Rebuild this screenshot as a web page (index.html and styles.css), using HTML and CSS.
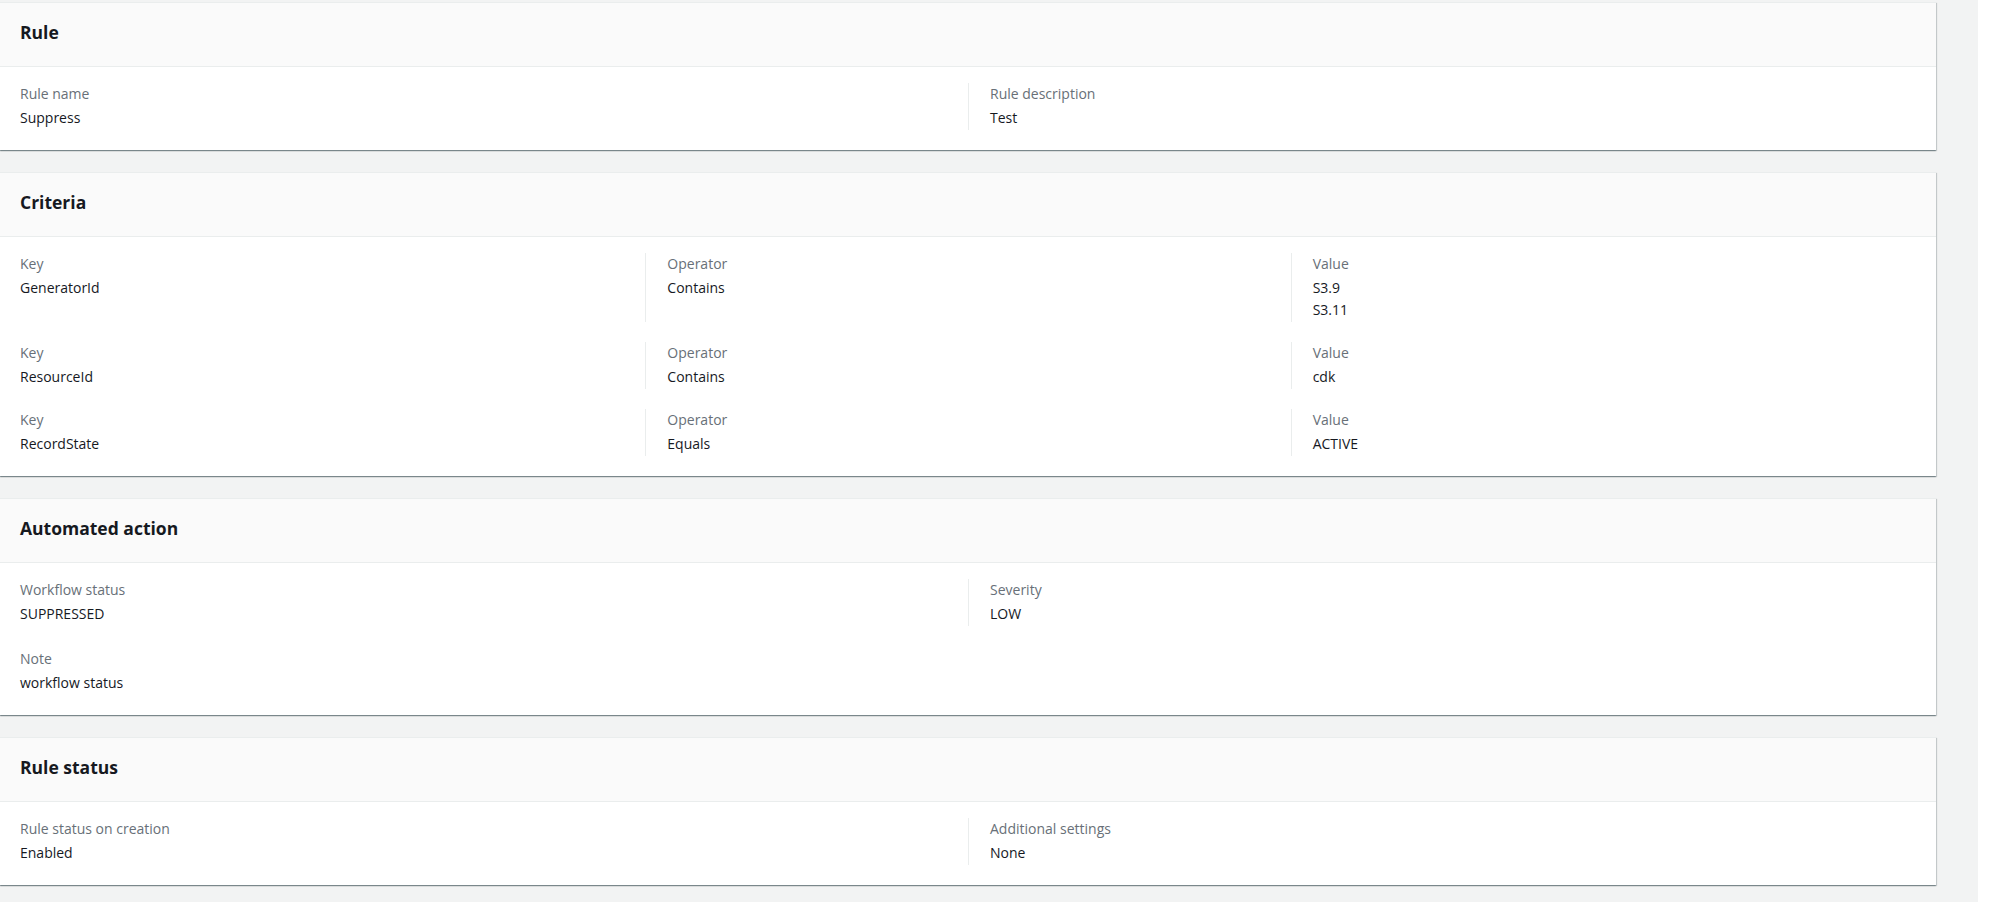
FILE: index.html
```html
<!DOCTYPE html>
<html lang="en">
<head>
<meta charset="utf-8">
<title>Rule details</title>
<link rel="stylesheet" href="styles.css">
</head>
<body>
<div class="page">
  <section class="panel">
    <div class="panel-header"><h2 class="panel-title">Rule</h2></div>
    <div class="panel-body">
      <div class="grid cols-2">
        <div class="cell"><div class="label">Rule name</div><div class="value">Suppress</div></div>
        <div class="cell"><div class="label">Rule description</div><div class="value">Test</div></div>
      </div>
    </div>
  </section>

  <section class="panel">
    <div class="panel-header"><h2 class="panel-title">Criteria</h2></div>
    <div class="panel-body">
      <div class="grid cols-3">
        <div class="cell"><div class="label">Key</div><div class="value">GeneratorId</div></div>
        <div class="cell"><div class="label">Operator</div><div class="value">Contains</div></div>
        <div class="cell"><div class="label">Value</div><div class="value">S3.9</div><div class="value">S3.11</div></div>
      </div>
      <div class="grid cols-3">
        <div class="cell"><div class="label">Key</div><div class="value">ResourceId</div></div>
        <div class="cell"><div class="label">Operator</div><div class="value">Contains</div></div>
        <div class="cell"><div class="label">Value</div><div class="value">cdk</div></div>
      </div>
      <div class="grid cols-3">
        <div class="cell"><div class="label">Key</div><div class="value">RecordState</div></div>
        <div class="cell"><div class="label">Operator</div><div class="value">Equals</div></div>
        <div class="cell"><div class="label">Value</div><div class="value">ACTIVE</div></div>
      </div>
    </div>
  </section>

  <section class="panel">
    <div class="panel-header"><h2 class="panel-title">Automated action</h2></div>
    <div class="panel-body body-tall">
      <div class="grid cols-2">
        <div class="cell stack">
          <div class="field"><div class="label">Workflow status</div><div class="value">SUPPRESSED</div></div>
          <div class="field"><div class="label">Note</div><div class="value">workflow status</div></div>
        </div>
        <div class="cell self-top"><div class="label">Severity</div><div class="value">LOW</div></div>
      </div>
    </div>
  </section>

  <section class="panel">
    <div class="panel-header"><h2 class="panel-title">Rule status</h2></div>
    <div class="panel-body">
      <div class="grid cols-2">
        <div class="cell"><div class="label">Rule status on creation</div><div class="value">Enabled</div></div>
        <div class="cell"><div class="label">Additional settings</div><div class="value">None</div></div>
      </div>
    </div>
  </section>
</div>
</body>
</html>
```

FILE: styles.css
```css
html, body {
  margin: 0;
  padding: 0;
  background: #ffffff;
}

body {
  font-family: "Open Sans", "Liberation Sans", sans-serif;
  color: #16191f;
  -webkit-font-smoothing: antialiased;
}

.page {
  width: 1978px;
  min-height: 902px;
  box-sizing: border-box;
  background: #f2f3f3;
  padding: 2px 42px 0 0;
  display: flex;
  flex-direction: column;
  gap: 22px;
}

.panel {
  background: #ffffff;
  border-top: 1px solid #eaeded;
  box-shadow: 0 1px 1px 0 rgba(0, 28, 36, 0.3),
              1px 1px 1px 0 rgba(0, 28, 36, 0.15),
              -1px 1px 1px 0 rgba(0, 28, 36, 0.15);
}

.panel-header {
  height: 64px;
  box-sizing: border-box;
  padding: 18px 20px 0 20px;
  background: #fafafa;
  border-bottom: 1px solid #eaeded;
}

.panel-title {
  margin: 0;
  font-size: 17.5px;
  line-height: 22px;
  font-weight: 700;
  color: #16191f;
}

.panel-body {
  padding: 16px 0 20px 0;
  display: flex;
  flex-direction: column;
  gap: 20px;
}

.body-tall {
  padding-bottom: 20px;
}

.grid {
  display: grid;
  align-items: stretch;
}

.cols-2 {
  grid-template-columns: 1fr 1fr;
}

.cols-3 {
  grid-template-columns: 1fr 1fr 1fr;
}

.cell {
  border-left: 1px solid #eaeded;
  padding: 0 19px 1px 21px;
  min-width: 0;
}

.cell:first-child {
  border-left-color: transparent;
  padding-left: 19px;
}

.self-top {
  align-self: start;
}

.stack {
  display: flex;
  flex-direction: column;
  gap: 22px;
  padding-bottom: 0;
}

.field {
  padding-bottom: 1px;
}

.label {
  font-size: 14px;
  line-height: 22px;
  color: #687078;
  margin-bottom: 2px;
}

.value {
  font-size: 14px;
  line-height: 22px;
  color: #16191f;
}
```
